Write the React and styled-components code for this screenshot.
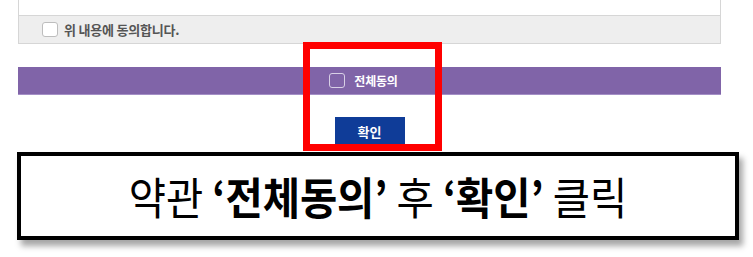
import React from "react";
import styled, { createGlobalStyle } from "styled-components";

const Global = createGlobalStyle`
  html, body { margin: 0; padding: 0; background: #ffffff; }
  body { font-family: "Noto Sans CJK KR", "Noto Sans", sans-serif; }
  * { box-sizing: border-box; }
`;

const Page = styled.div`
  position: relative;
  width: 753px;
  height: 257px;
  overflow: hidden;
  padding-left: 18px;
`;

const TermsBox = styled.div`
  width: 703px;
  border: 1px solid #d6d6d6;
  border-top: none;
`;

const TermsBody = styled.div`
  height: 15px;
  background: #ffffff;
`;

const AgreeRow = styled.label`
  display: flex;
  align-items: center;
  gap: 6px;
  height: 28px;
  padding-left: 23px;
  background: #eeeeee;
  border-top: 1px solid #d6d6d6;
  font-size: 13px;
  font-weight: 700;
  color: #555555;
  letter-spacing: -0.2px;
`;

const Check = styled.span`
  display: inline-block;
  width: 16px;
  height: 15px;
  border-radius: 3px;
  border: 1px solid ${(p) => (p.$light ? "#d8d0e6" : "#bdbdbd")};
  background: ${(p) => (p.$light ? "transparent" : "#ffffff")};
`;

const AllBar = styled.div`
  margin-top: 23px;
  width: 703px;
  height: 28px;
  background: #8064a8;
  border-bottom: 1px solid #a48fc6;
  display: flex;
  justify-content: center;
  align-items: center;
`;

const AllLabel = styled.label`
  display: flex;
  align-items: center;
  gap: 9px;
  margin-right: 12px;
  color: #ffffff;
  font-size: 12px;
  font-weight: 700;
  letter-spacing: -0.2px;
`;

const ButtonRow = styled.div`
  width: 703px;
  display: flex;
  justify-content: center;
  margin-top: 22px;
`;

const ConfirmButton = styled.button`
  width: 70px;
  height: 28px;
  border: none;
  background: #0f3c98;
  color: #ffffff;
  font-family: "Noto Sans CJK KR", sans-serif;
  font-size: 13px;
  font-weight: 700;
  padding: 0;
`;

const Highlight = styled.div`
  position: absolute;
  left: 303px;
  top: 42px;
  width: 139px;
  height: 109px;
  border: 7px solid #ff0000;
  pointer-events: none;
`;

const Caption = styled.div`
  margin-top: 7px;
  margin-left: -1px;
  width: 722px;
  height: 88px;
  border: 4px solid #000000;
  background: #ffffff;
  box-shadow: 4px 6px 6px rgba(0, 0, 0, 0.35);
  display: flex;
  align-items: center;
  justify-content: center;
`;

const CaptionText = styled.div`
  font-family: "Noto Sans CJK KR", sans-serif;
  font-size: 44px;
  font-weight: 400;
  color: #000000;
  white-space: nowrap;
  transform: scaleX(0.92);
  line-height: 1;
`;

const Strong = styled.b`
  font-weight: 700;
`;

export default function App() {
  return (
    <>
      <Global />
      <Page>
        <TermsBox>
          <TermsBody />
          <AgreeRow>
            <Check />
            위 내용에 동의합니다.
          </AgreeRow>
        </TermsBox>
        <AllBar>
          <AllLabel>
            <Check $light />
            전체동의
          </AllLabel>
        </AllBar>
        <ButtonRow>
          <ConfirmButton>확인</ConfirmButton>
        </ButtonRow>
        <Caption>
          <CaptionText>
            약관 <Strong>‘전체동의’</Strong> 후 <Strong>‘확인’</Strong> 클릭
          </CaptionText>
        </Caption>
        <Highlight />
      </Page>
    </>
  );
}
